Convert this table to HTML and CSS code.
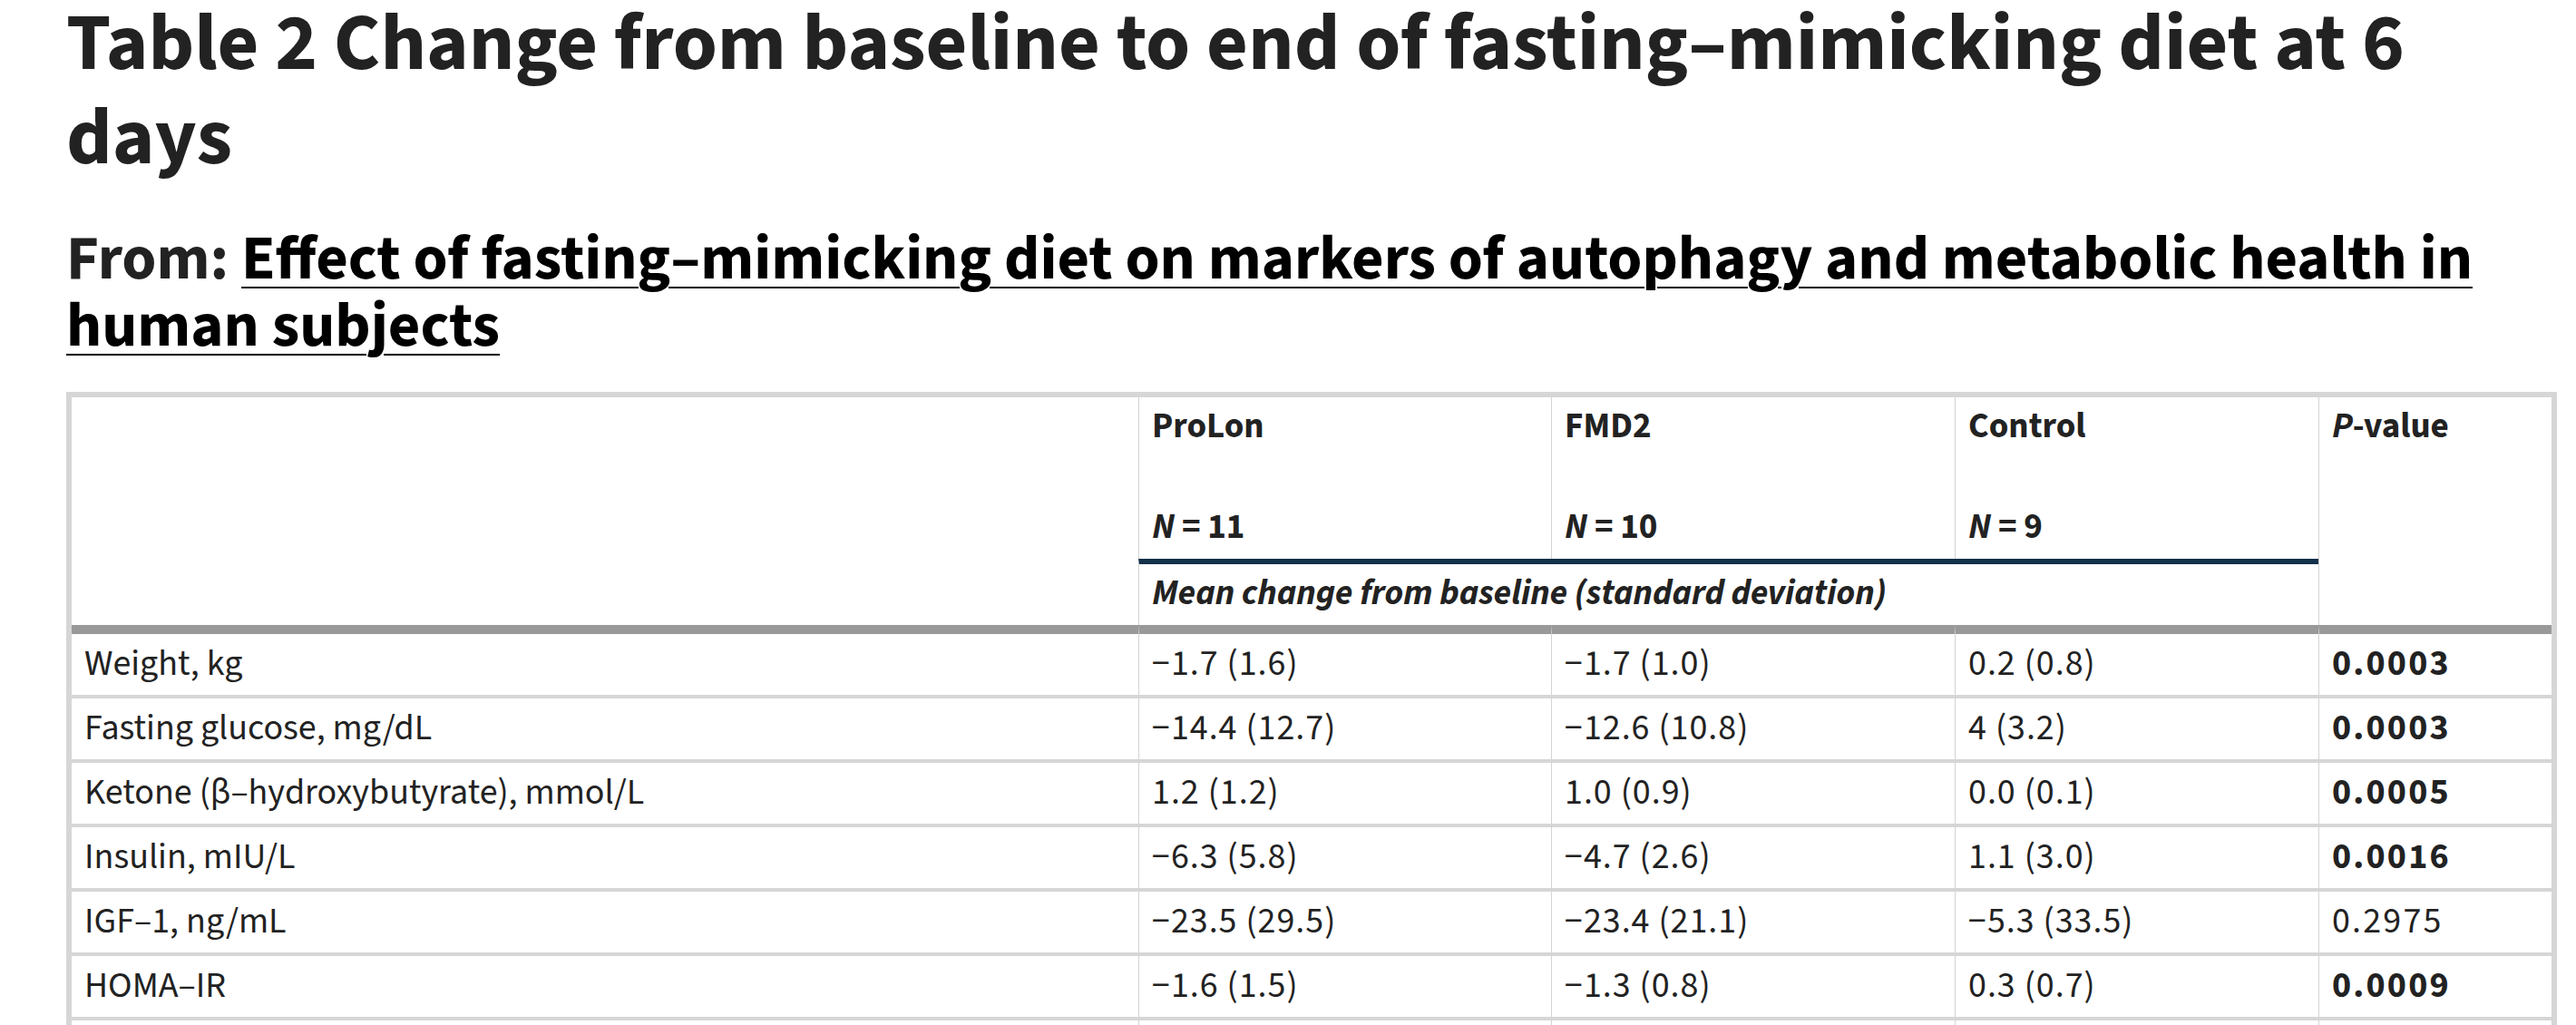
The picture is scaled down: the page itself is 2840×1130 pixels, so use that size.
FILE: index.html
```html
<!DOCTYPE html>
<html lang="en">
<head>
<meta charset="utf-8">
<title>Table 2 Change from baseline to end of fasting-mimicking diet at 6 days</title>
<link rel="stylesheet" href="styles.css">
</head>
<body>
<main class="page">
  <h1 class="title">Table 2 Change from baseline to end of fasting–mimicking diet at 6 days</h1>
  <h2 class="from">From: <a class="from-link" href="#">Effect of fasting–mimicking diet on markers of autophagy and metabolic health in human subjects</a></h2>
  <table class="data">
    <colgroup>
      <col class="c-label">
      <col class="c-prolon">
      <col class="c-fmd2">
      <col class="c-control">
      <col class="c-p">
    </colgroup>
    <thead>
      <tr>
        <th class="stub" rowspan="2"></th>
        <th class="grp">ProLon<br><br><i>N</i> = 11</th>
        <th class="grp">FMD2<br><br><i>N</i> = 10</th>
        <th class="grp">Control<br><br><i>N</i> = 9</th>
        <th class="grp" rowspan="2"><i>P</i>-value</th>
      </tr>
      <tr>
        <th class="mean" colspan="3"><i>Mean change from baseline (standard deviation)</i></th>
      </tr>
    </thead>
    <tbody>
      <tr>
        <td>Weight, kg</td>
        <td class="num">−1.7 (1.6)</td>
        <td class="num">−1.7 (1.0)</td>
        <td class="num">0.2 (0.8)</td>
        <td class="pval sig">0.0003</td>
      </tr>
      <tr>
        <td>Fasting glucose, mg/dL</td>
        <td class="num">−14.4 (12.7)</td>
        <td class="num">−12.6 (10.8)</td>
        <td class="num">4 (3.2)</td>
        <td class="pval sig">0.0003</td>
      </tr>
      <tr>
        <td>Ketone (β–hydroxybutyrate), mmol/L</td>
        <td class="num">1.2 (1.2)</td>
        <td class="num">1.0 (0.9)</td>
        <td class="num">0.0 (0.1)</td>
        <td class="pval sig">0.0005</td>
      </tr>
      <tr>
        <td>Insulin, mIU/L</td>
        <td class="num">−6.3 (5.8)</td>
        <td class="num">−4.7 (2.6)</td>
        <td class="num">1.1 (3.0)</td>
        <td class="pval sig">0.0016</td>
      </tr>
      <tr>
        <td>IGF–1, ng/mL</td>
        <td class="num">−23.5 (29.5)</td>
        <td class="num">−23.4 (21.1)</td>
        <td class="num">−5.3 (33.5)</td>
        <td class="pval">0.2975</td>
      </tr>
      <tr>
        <td>HOMA–IR</td>
        <td class="num">−1.6 (1.5)</td>
        <td class="num">−1.3 (0.8)</td>
        <td class="num">0.3 (0.7)</td>
        <td class="pval sig">0.0009</td>
      </tr>
      <tr>
        <td>&nbsp;</td>
        <td>&nbsp;</td>
        <td>&nbsp;</td>
        <td>&nbsp;</td>
        <td>&nbsp;</td>
      </tr>
    </tbody>
  </table>
</main>
</body>
</html>
```
FILE: styles.css
```css
html, body {
  margin: 0;
  padding: 0;
  background: #ffffff;
}

body {
  font-family: "Source Sans 3", "Source Sans Pro", "Lato", sans-serif;
  color: #222222;
}

.page {
  width: 2746px;
  padding: 0 0 0 73px;
}

.title {
  margin: -4px 0 0 0;
  font-size: 88.7px;
  line-height: 104px;
  font-weight: 700;
  color: #222222;
}

.from {
  margin: 45px 0 0 0;
  font-size: 68.8px;
  line-height: 74px;
  font-weight: 700;
  color: #222222;
}

.from-link {
  color: #000000;
  text-decoration: underline;
  text-decoration-thickness: 2px;
  text-underline-offset: 9px;
}

.data {
  margin-top: 35px;
  width: 2746px;
  table-layout: fixed;
  border-collapse: separate;
  border-spacing: 0;
  border: 6px solid #d6d6d6;
  border-bottom: 0;
  line-height: 55.5px;
}

.c-label { width: 1176px; }
.c-prolon { width: 455px; }
.c-fmd2 { width: 445px; }
.c-control { width: 401px; }
.c-p { width: 257px; }

.data th,
.data td {
  box-sizing: border-box;
  text-align: left;
  vertical-align: top;
  white-space: nowrap;
}

.data th {
  font-size: 39px;
  font-weight: 700;
  padding: 5.1px 14px 6.4px 14px;
}

.data td {
  font-size: 40px;
  font-weight: 400;
  padding: 4.8px 14px 6.7px 14px;
}

.data th.grp,
.data th.mean,
.data td + td {
  border-left: 1px solid #d3d3d3;
}

.data th.mean {
  border-top: 6px solid #13314b;
}

.data tbody td {
  border-top: 4px solid #d6d6d6;
}

.data tbody tr:first-child td {
  border-top: 10px solid #999999;
}

.data td.num {
  letter-spacing: 1px;
}

.data td.pval {
  letter-spacing: 2.2px;
}

.data td.sig {
  font-weight: 700;
}
```
